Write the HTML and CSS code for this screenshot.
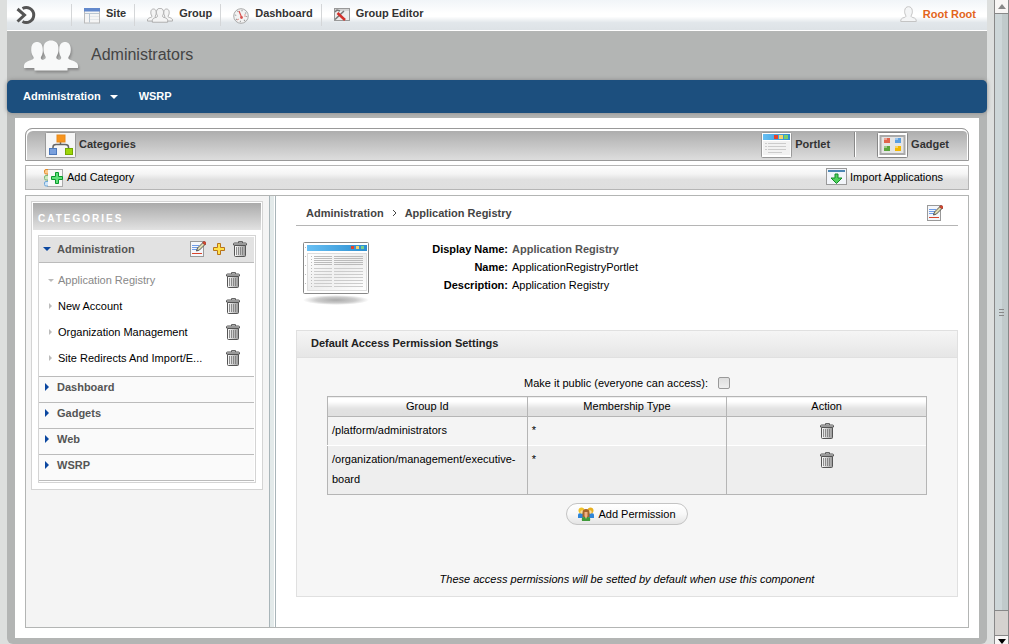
FILE: index.html
```
<!DOCTYPE html>
<html lang="en">

<head>
   <meta charset="UTF-8">
   <meta name="viewport" content="width=device-width, initial-scale=1.0">
   <title>Application Registry</title>
   <link rel="stylesheet" href="styles.css">
</head>

<body>
   <!-- shared icons and gradients -->
   <svg class="defs" aria-hidden="true">
      <defs>
         <linearGradient id="g-steel" x1="0" x2="1">
            <stop offset="0" stop-color="#fff" />
            <stop offset="1" stop-color="#999" />
         </linearGradient>
         <linearGradient id="g-paper" x1="0" y1="0" x2="1" y2="1">
            <stop offset="0" stop-color="#fff" />
            <stop offset="0.5" stop-color="#eee" />
            <stop offset="1" stop-color="#fff" />
         </linearGradient>
         <linearGradient id="g-sky" x1="0" x2="1">
            <stop offset="0" stop-color="#68c0f4" />
            <stop offset="1" stop-color="#2b8ed0" />
         </linearGradient>
         <radialGradient id="g-shadow">
            <stop offset="0" stop-color="#aaa" />
            <stop offset="0.6" stop-color="#ccc" />
            <stop offset="1" stop-color="#fff" />
         </radialGradient>
      </defs>
      <symbol id="trash" viewBox="0 0 16 16">
         <path d="M2.500 4.500h11v10q0 1-1 1h-9q-1 0-1-1z" fill="url(#g-steel)" stroke="#555" />
         <path d="M4.500 6v8M6.500 6v8M8.500 6v8M10.500 6v8" stroke="#777" stroke-width=".8" />
         <path d="M6.500 2V.5h4V2" fill="none" stroke="#666" />
         <path d="M1.500 4V3q0-1 1-1h11q1 0 1 1v1z" fill="#ddd" stroke="#555" />
      </symbol>
      <symbol id="edit" viewBox="0 0 16 16">
         <rect x=".5" y=".5" width="13" height="15" fill="#f5f7fb" stroke="#999" />
         <path d="M2 4.500h7M2 6.500h7M2 8.500h5" stroke="#6f9de8" />
         <path d="M2 12.500h10" stroke="#d8452c" />
         <path d="M6.500 10l1-3 5.500-5.500 2 2-5.500 5.500z" fill="#e0dcb0" stroke="#444" stroke-width=".9" />
         <path d="M12.500 2l1-1.500h1.500l1 1v1.500l-1 1z" fill="#d8452c" stroke="#874038" stroke-width=".6" />
      </symbol>
      <symbol id="people" viewBox="0 0 56 32">
         <path d="M1 28c-.5-4 1-5.500 4.500-7 3-1.200 6-1.500 5-4C8.300 14 8 11 8.300 8c.4-4 2.700-6 5.700-6s5.300 2 5.700 6c.3 3 .3 6-1.700 9-.8 2.500 1.500 2.800 4 4V28z" />
         <path d="M55 28c.5-4-1-5.500-4.500-7-3-1.200-6-1.500-5-4 2.200-3 2.500-6 2.200-9-.4-4-2.700-6-5.700-6s-5.300 2-5.700 6c-.3 3-.3 6 1.700 9 .8 2.500-1.500 2.800-4 4V28z" />
         <path d="M11.500 30.500c-.5-6 1-8 5-9.500 4-1.500 7-1.700 6-4.500C20.500 13 20.300 11 20.500 7.500 21 2.500 24 .5 28 .5s7 2 7.500 7c.2 3.500 0 5.500-2 9-1 2.800 2 3 6 4.500 4 1.500 5.500 3.500 5 9.500z" class="front" />
      </symbol>
   </svg>

   <div class="page">
      <header class="topbar">
         <a class="logo" href="#" aria-label="Home">
            <svg width="22" height="20" viewBox="0 0 22 20">
               <path d="M6.500 3.500a7.500 7.500 0 1 1 0 13" fill="none" stroke="#555" stroke-width="3" />
               <path d="M1.500 4l7 6-7 6.500" fill="none" stroke="#555" stroke-width="3" />
            </svg>
         </a>
         <nav class="menu">
            <a href="#">
               <svg width="16" height="16" viewBox="0 0 16 16">
                  <rect x=".5" y=".5" width="15" height="14.500" fill="#f5f5f5" stroke="#bbb" />
                  <path d="M0 0h16v3.500H0z" fill="#6389cc" />
                  <path d="M1 5.500h14M5.500 5.500v9" stroke="#b9c6d2" />
                  <path d="M6 8.500h9M6 11.500h9" stroke="#e4e8ec" />
               </svg>
               Site
            </a>
            <a href="#">
               <svg class="people-small" width="26" height="15">
                  <use href="#people" />
               </svg>
               Group
            </a>
            <a href="#">
               <svg width="16" height="16" viewBox="0 0 16 16">
                  <circle cx="8" cy="8" r="7.300" fill="#f3f3f3" stroke="#aaa" />
                  <circle cx="8" cy="8" r="5.500" fill="none" stroke="#999" stroke-width="1.500" stroke-dasharray="1 3.300" />
                  <path d="M6 3l2.500 6" stroke="#d9534f" stroke-width="1.200" />
                  <circle cx="8.500" cy="9.500" r="1.400" fill="#d9534f" />
                  <path d="M12 6v3M4 12l2-1" stroke="#e59a94" />
               </svg>
               Dashboard
            </a>
            <a href="#">
               <svg width="16" height="13" viewBox="0 0 16 13">
                  <rect x=".5" y=".5" width="15" height="12" fill="#ececec" stroke="#999" />
                  <path d="M1 2h14" stroke="#bbb" />
                  <path d="M1 11.500L10 3M1 4l2-2 3 1" fill="none" stroke="#777" stroke-width="1.500" />
                  <path d="M3.500 5L11 12" stroke="#d3302a" stroke-width="2.500" />
               </svg>
               Group Editor
            </a>
         </nav>
         <a class="user" href="#">
            <svg width="17" height="17" viewBox="0 0 17 17">
               <path d="M.7 15.500c0-2.500 1-3.500 3.500-4 1.800-.4 2-1.200 1.300-2.500C4.700 7.500 4.500 6 4.700 4.500 5 2 6.500.7 8.500.7s3.500 1.300 3.800 3.800c.2 1.500 0 3-.8 4.500-.7 1.300-.5 2.100 1.300 2.500 2.500.5 3.500 1.500 3.500 4z" fill="#f4f5f6" stroke="#c4c4c4" />
            </svg>
            Root Root
         </a>
      </header>

      <div class="group-head">
         <svg class="people-large" width="56" height="32">
            <use href="#people" />
         </svg>
         <h1>Administrators</h1>
      </div>

      <nav class="main-nav">
         <a href="#">Administration <span class="caret"></span></a>
         <a href="#">WSRP</a>
      </nav>

      <main class="content">
         <div class="tabs">
            <a class="tab" href="#">
               <svg width="31" height="26" viewBox="0 0 31 26">
                  <rect x=".5" y=".5" width="30" height="25" rx="1" fill="#f6f6f6" stroke="#999" />
                  <path d="M15.500 9v4M8 17v-2q0-2.500 3-2.500h9q3.500 0 3.500 2.500v2" fill="none" stroke="#666" stroke-width="1.500" />
                  <rect x="12" y="3" width="8" height="7" fill="#f7941d" stroke="#e8891a" />
                  <rect x="4.500" y="16.500" width="7" height="6" fill="#7aa0dc" stroke="#4c78bc" />
                  <rect x="20.500" y="16.500" width="7" height="6" fill="#9ed50a" stroke="#74a800" />
               </svg>
               Categories
            </a>
            <a class="tab portlet-tab" href="#">
               <svg width="31" height="26" viewBox="0 0 31 26">
                  <rect x=".5" y=".5" width="30" height="25" rx="1" fill="#fff" stroke="#999" />
                  <path d="M2 2h27v6H2z" fill="url(#g-sky)" />
                  <path d="M13 3h4v4h-4z" fill="#e5422b" />
                  <path d="M18 3h4v4h-4z" fill="#f7d36b" />
                  <path d="M23 3h4v4h-4z" fill="#7ccf6b" />
                  <path d="M2 9h27v14H2z" fill="#f2f2f2" />
                  <path d="M4 11.500h2M7 11.500h18M4 14.500h2M7 14.500h18M4 17.500h2M7 17.500h18M7 20.500h14" stroke="#ccc" />
               </svg>
               Portlet
            </a>
            <a class="tab gadget-tab" href="#">
               <svg width="31" height="26" viewBox="0 0 31 26">
                  <rect x=".5" y=".5" width="30" height="25" rx="1" fill="#fff" stroke="#888" />
                  <rect x="3.500" y="4" width="24" height="18" fill="#e5e5e5" stroke="#aaa" stroke-width="2" />
                  <path d="M7 6h6v5H7z" fill="#e0644c" />
                  <path d="M18 6h6v5h-6z" fill="#5b9fe0" />
                  <path d="M7 14h6v5H7z" fill="#5ba63c" />
                  <path d="M18 14h6v5h-6z" fill="#f4b800" />
                  <path d="M7 6h3v2H7zM18 6h3v2h-3zM7 14h3v2H7zM18 14h3v2h-3z" fill="#fff" opacity=".4" />
               </svg>
               Gadget
            </a>
         </div>

         <div class="actions">
            <a class="action" href="#">
               <svg width="20" height="20" viewBox="0 0 20 20">
                  <rect x="3.500" y="1.500" width="15" height="17" fill="#f8f8f8" stroke="#aaa" />
                  <path d="M4 1.500H2Q.5 1.500.5 3v1.500Q.5 6 2 6h2" fill="#fbc98a" stroke="#e08a2a" />
                  <path d="M4 7.500H2Q.5 7.500.5 9v1.500Q.5 12 2 12h2" fill="#cdeac0" stroke="#7cb87a" />
                  <path d="M4 13.500H2Q.5 13.500.5 15v1.500Q.5 18 2 18h2" fill="#cfe4f8" stroke="#6fa8d8" />
                  <path d="M11.500 4.500h3v4h4v3h-4v4h-3v-4h-4v-3h4z" fill="#5fe07a" stroke="#0a9a2c" />
               </svg>
               Add Category
            </a>
            <a class="action import" href="#">
               <svg width="21" height="18" viewBox="0 0 21 18">
                  <rect x=".5" y=".5" width="20" height="16" fill="#f2f5fa" stroke="#999" />
                  <path d="M2 2h17v2H2z" fill="#4a86b4" />
                  <path d="M9 6h3v4h4l-5.500 5.500L5 10h4z" fill="#4fd15c" stroke="#148a28" />
               </svg>
               Import Applications
            </a>
         </div>

         <div class="workspace">
            <aside class="sidebar">
               <div class="tree">
                  <h2>CATEGORIES</h2>
                  <div class="tree-body">
                     <div class="category open">
                        <svg class="arrow" width="8" height="8" viewBox="0 0 8 8">
                           <path d="M0 2h8L4 6z" fill="#0b47a0" />
                        </svg>
                        <a href="#">Administration</a>
                        <button class="icon" aria-label="Edit category"><svg width="16" height="16"><use href="#edit" /></svg></button>
                        <button class="icon" aria-label="Add application">
                           <svg width="14" height="14" viewBox="0 0 14 14">
                              <path d="M5.500 1.500h3v4h4v3h-4v4h-3v-4h-4v-3h4z" fill="#ffe14a" stroke="#b8741a" />
                           </svg>
                        </button>
                        <button class="icon" aria-label="Delete category"><svg width="16" height="16"><use href="#trash" /></svg></button>
                     </div>
                     <ul class="apps">
                        <li class="selected">
                           <svg class="arrow" width="6" height="6" viewBox="0 0 6 6"><path d="M0 2h6L3 5z" fill="#bbb" /></svg>
                           <a href="#">Application Registry</a>
                           <button class="icon" aria-label="Delete Application Registry"><svg width="16" height="16"><use href="#trash" /></svg></button>
                        </li>
                        <li>
                           <svg class="arrow" width="6" height="6" viewBox="0 0 6 6"><path d="M1 0l3 3-3 3z" fill="#bbb" /></svg>
                           <a href="#">New Account</a>
                           <button class="icon" aria-label="Delete New Account"><svg width="16" height="16"><use href="#trash" /></svg></button>
                        </li>
                        <li>
                           <svg class="arrow" width="6" height="6" viewBox="0 0 6 6"><path d="M1 0l3 3-3 3z" fill="#bbb" /></svg>
                           <a href="#">Organization Management</a>
                           <button class="icon" aria-label="Delete Organization Management"><svg width="16" height="16"><use href="#trash" /></svg></button>
                        </li>
                        <li>
                           <svg class="arrow" width="6" height="6" viewBox="0 0 6 6"><path d="M1 0l3 3-3 3z" fill="#bbb" /></svg>
                           <a href="#">Site Redirects And Import/E...</a>
                           <button class="icon" aria-label="Delete Site Redirects"><svg width="16" height="16"><use href="#trash" /></svg></button>
                        </li>
                     </ul>
                     <div class="category">
                        <svg class="arrow" width="8" height="8" viewBox="0 0 8 8"><path d="M2 0l4 4-4 4z" fill="#0b47a0" /></svg>
                        <a href="#">Dashboard</a>
                     </div>
                     <div class="category">
                        <svg class="arrow" width="8" height="8" viewBox="0 0 8 8"><path d="M2 0l4 4-4 4z" fill="#0b47a0" /></svg>
                        <a href="#">Gadgets</a>
                     </div>
                     <div class="category">
                        <svg class="arrow" width="8" height="8" viewBox="0 0 8 8"><path d="M2 0l4 4-4 4z" fill="#0b47a0" /></svg>
                        <a href="#">Web</a>
                     </div>
                     <div class="category">
                        <svg class="arrow" width="8" height="8" viewBox="0 0 8 8"><path d="M2 0l4 4-4 4z" fill="#0b47a0" /></svg>
                        <a href="#">WSRP</a>
                     </div>
                  </div>
               </div>
            </aside>
            <div class="splitter"></div>

            <section class="detail">
               <div class="crumbs">
                  <a href="#">Administration</a>
                  <svg width="5" height="8" viewBox="0 0 5 8"><path d="M1 1l3 3-3 3" fill="none" stroke="#444" /></svg>
                  <span>Application Registry</span>
                  <button class="icon" aria-label="Edit application"><svg width="16" height="16"><use href="#edit" /></svg></button>
               </div>

               <div class="summary">
                  <svg width="70" height="66" viewBox="0 -1 70 66">
                     <ellipse cx="35" cy="59" rx="33" ry="5" fill="url(#g-shadow)" />
                     <rect x="2.500" y="1.500" width="65" height="51" rx="1" fill="#fff" stroke="#888" />
                     <rect x="6" y="4" width="60" height="6" fill="url(#g-sky)" />
                     <path d="M50 5h3v3h-3z" fill="#e5422b" />
                     <path d="M55 5h3v3h-3z" fill="#f7d36b" />
                     <path d="M60 5h3v3h-3z" fill="#7ccf8b" />
                     <rect x="6.500" y="12.500" width="59" height="37" fill="url(#g-paper)" stroke="#ddd" />
                     <path d="M13 15.500h49M13 17.500h49M13 19.500h49M13 21.500h49M13 23.500h49" stroke="#bbb" />
                     <path d="M13 27.500h49M13 30.500h49M13 33.500h49M13 36.500h49M13 39.500h49M13 42.500h49M13 45.500h49" stroke="#ccc" />
                     <path d="M32 15v32" stroke="#f2f2f2" stroke-width="2" />
                     <path d="M10.500 15v31" stroke="#bbb" stroke-dasharray="1 2" />
                     <path d="M4.500 6v44" stroke="#bbb" stroke-dasharray="1 8" />
                  </svg>
                  <dl>
                     <dt>Display Name:</dt>
                     <dd class="strong">Application Registry</dd>
                     <dt>Name:</dt>
                     <dd>ApplicationRegistryPortlet</dd>
                     <dt>Description:</dt>
                     <dd>Application Registry</dd>
                  </dl>
               </div>

               <div class="panel">
                  <h3>Default Access Permission Settings</h3>
                  <div class="panel-body">
                     <div class="public">
                        <label for="public">Make it public (everyone can access):</label>
                        <input type="checkbox" id="public">
                     </div>
                     <table>
                        <thead>
                           <tr>
                              <th>Group Id</th>
                              <th>Membership Type</th>
                              <th>Action</th>
                           </tr>
                        </thead>
                        <tbody>
                           <tr>
                              <td>/platform/administrators</td>
                              <td>*</td>
                              <td class="center"><button class="icon" aria-label="Delete permission"><svg width="16" height="16"><use href="#trash" /></svg></button></td>
                           </tr>
                           <tr>
                              <td>/organization/management/executive-board</td>
                              <td>*</td>
                              <td class="center"><button class="icon" aria-label="Delete permission"><svg width="16" height="16"><use href="#trash" /></svg></button></td>
                           </tr>
                        </tbody>
                     </table>
                     <button class="add">
                        <svg width="16" height="14" viewBox="0 0 16 14">
                           <path d="M0 11V8q0-2 3-2h2v5zM16 11V8q0-2-3-2h-2v5z" fill="#2f86d8" />
                           <circle cx="3.500" cy="3.500" r="3" fill="#f0c22a" />
                           <circle cx="12.500" cy="3.500" r="3" fill="#e8b020" />
                           <circle cx="4" cy="5" r="1.700" fill="#f9dca0" />
                           <circle cx="12" cy="5" r="1.700" fill="#f9dca0" />
                           <path d="M4 14q-1-4 2-4h4q3 0 2 4z" fill="#3f9a3a" />
                           <path d="M4.500 10V6q0-4 3.500-4t3.500 4v4z" fill="#a5652a" />
                           <path d="M6.500 5h3v4l-1.500 3-1.500-3z" fill="#f2b184" />
                        </svg>
                        Add Permission
                     </button>
                     <p class="note">These access permissions will be setted by default when use this component</p>
                  </div>
               </div>
            </section>
         </div>
      </main>
   </div>

   <div class="scroll" aria-hidden="true">
      <div class="scroll-end"><svg width="8" height="5" viewBox="0 0 8 5"><path d="M0 5l4-5 4 5z" fill="#888" /></svg></div>
      <div class="scroll-thumb"><span></span><span></span><span></span></div>
      <div class="scroll-track"></div>
      <div class="scroll-end down"><svg width="8" height="5" viewBox="0 0 8 5"><path d="M0 0h8L4 5z" fill="#000" /></svg></div>
   </div>
</body>

</html>
```
FILE: styles.css
```
* {
   box-sizing: border-box;
}

body {
   margin: 0;
   display: flex;
   min-height: 100vh;
   background-color: #dddfde;
   font-family: "Liberation Sans", Arial, sans-serif;
   font-size: 11px;
   line-height: 18px;
   color: #000;
}

a {
   color: inherit;
   text-decoration: none;
}

svg {
   display: block;
   flex: none;
}

.defs {
   position: absolute;
   width: 0;
   height: 0;
}

button {
   font: inherit;
   color: inherit;
   cursor: pointer;
}

.icon {
   padding: 0;
   border: 0;
   background: none;
}

.page {
   flex: 1;
   min-width: 0;
   margin: 0 7px;
   background-color: #b3b5b4;
   border-radius: 0 0 6px 6px;
   display: flex;
   flex-direction: column;
}

/* top bar */
.topbar {
   display: flex;
   height: 31px;
   padding: 0 11px 0 9px;
   border-bottom: 1px solid #fff;
   background: linear-gradient(#f1f5f8, #fff 45%, #fff 55%, #e2e7eb 75%, #dde2e6);
   font-weight: bold;
   color: #333;
}

.logo {
   width: 55px;
   padding-top: 5px;
}

.menu {
   display: flex;
   flex: 1;
   align-items: flex-start;
   padding-top: 4px;
}

.menu a,
.user {
   display: flex;
   gap: 6px;
}

.menu a {
   height: 22px;
   padding: 0 8px 0 12px;
   border-left: 1px solid #d4d6d8;
}

.menu svg {
   margin-top: 4px;
}

.user {
   padding-top: 5px;
   color: #e2651c;
}

.user svg {
   margin-top: 1px;
}

.people-small {
   fill: #f4f4f4;
   stroke: #aaa;
   stroke-width: 2;
}

.people-large {
   fill: #f8f9f9;
   filter: drop-shadow(1px 2px 1px #888);
}

.people-large .front {
   stroke: #999;
}

.group-head {
   display: flex;
   gap: 12px;
   height: 49px;
   padding: 9px 16px;
}

.group-head h1 {
   margin: 0;
   font-size: 16px;
   font-weight: normal;
   line-height: 30px;
   color: #444;
}

.main-nav {
   display: flex;
   gap: 21px;
   height: 33px;
   padding: 0 16px;
   border-radius: 5px;
   background-color: #1c4f7e;
   box-shadow: 0 0 4px #888;
   font-weight: bold;
   line-height: 33px;
   color: #fff;
}

.main-nav a {
   display: flex;
   align-items: center;
   gap: 9px;
}

.caret {
   border: 4px solid transparent;
   border-top-color: #fff;
   border-bottom: 0;
}

.content {
   flex: 1;
   display: flex;
   flex-direction: column;
   margin: 5px 8px 6px;
   padding: 10px;
   background-color: #fff;
}

/* toolbars */
.tabs {
   display: flex;
   height: 33px;
   padding: 3px 19px;
   border: 1px solid #999;
   border-radius: 7px 7px 0 0;
   background: linear-gradient(#aaa, #ddd);
   box-shadow: inset 1px 2px #fff, inset -1px 0 #fff;
   font-weight: bold;
   color: #333;
}

.tab,
.action {
   display: flex;
   gap: 3px;
}

.tab {
   line-height: 24px;
}

.portlet-tab {
   margin-left: auto;
   padding-right: 24px;
   border-right: 1px solid #888;
}

.gadget-tab {
   padding-left: 21px;
   border-left: 1px solid #fff;
}

.actions {
   display: flex;
   justify-content: space-between;
   height: 25px;
   margin: 4px 0 5px;
   padding: 2px 25px 2px 18px;
   border: 1px solid #b5b5b5;
   background: linear-gradient(#fff, #f4f4f4 35%, #e0e0e0 60%, #dfdfdf);
   line-height: 18px;
}

.workspace {
   flex: 1;
   display: flex;
   border: 1px solid #b3b5b4;
}

/* category tree */
.sidebar {
   width: 243px;
   padding: 5px;
   background-color: #f4f4f4;
}

.tree {
   width: 232px;
   padding: 1px 1px 6px;
   border: 1px solid #d4d4d4;
   background-color: #fff;
}

.tree h2 {
   margin: 0 0 5px;
   padding: 7px 5px 2px;
   background: linear-gradient(#aaa, #e2e2e2);
   font-size: 10px;
   line-height: 18px;
   letter-spacing: 2px;
   color: #fff;
}

.tree-body {
   margin: 0 5px;
   padding: 1px 1px 1px 0;
   border: 1px solid #d4d4d4;
}

.category {
   display: flex;
   align-items: center;
   gap: 6px;
   height: 26px;
   padding: 0 6px 6px 4px;
   border-bottom: 1px solid #bbb;
   background-color: #fafafa;
   font-weight: bold;
   color: #555;
}

.category.open {
   padding-bottom: 1px;
   background-color: #e2e2e2;
}

.category a,
.apps a {
   flex: 1;
}

.apps {
   margin: 0;
   padding: 4px 13px 5px 9px;
   border-bottom: 1px solid #bbb;
   list-style: none;
}

.apps li {
   display: flex;
   align-items: center;
   gap: 4px;
   height: 26px;
}

.apps .selected {
   color: #888;
}

.splitter {
   width: 7px;
   border: 1px solid #a9b5b9;
   border-width: 0 1px;
   background-color: #e3eaea;
   box-shadow: inset -1px 0 #fff;
}

/* application details */
.detail {
   flex: 1;
   min-width: 0;
   padding: 9px 10px 30px 20px;
}

.crumbs {
   display: flex;
   align-items: center;
   gap: 8px;
   height: 21px;
   padding: 0 15px 4px 10px;
   border-bottom: 1px solid #b5b5b5;
   font-weight: bold;
   color: #444;
}

.crumbs .icon {
   margin-left: auto;
}

.summary {
   display: flex;
   padding: 14px 0 24px 5px;
}

.summary dl {
   display: grid;
   grid-template-columns: 137px auto;
   column-gap: 4px;
   align-content: start;
   margin: 0;
}

.summary dt {
   font-weight: bold;
   text-align: right;
}

.summary dd {
   margin: 0;
}

.summary .strong {
   font-weight: bold;
   color: #555;
}

.panel {
   border: 1px solid #e0e0e0;
   background-color: #f6f6f6;
}

.panel h3 {
   margin: 0;
   padding: 3px 14px 5px;
   border-bottom: 1px solid #e0e0e0;
   background: linear-gradient(#f5f5f5, #e6e6e6);
   font-size: 11px;
   line-height: 18px;
   color: #222;
}

.panel-body {
   display: flex;
   flex-direction: column;
   align-items: center;
   padding: 16px 30px 8px;
}

.public {
   display: flex;
   align-items: center;
   gap: 10px;
   margin-bottom: 4px;
}

.public input {
   appearance: none;
   width: 12px;
   height: 12px;
   margin: 0;
   border: 1px solid #999;
   border-radius: 2px;
   background: linear-gradient(#ddd, #eee);
}

table {
   width: 100%;
   table-layout: fixed;
   border-collapse: collapse;
   border: 1px solid #b5b5b5;
   line-height: 20px;
}

th,
td {
   padding: 0 4px;
   border-right: 1px solid #b5b5b5;
}

th {
   border-bottom: 1px solid #b5b5b5;
   background: linear-gradient(#fff 20%, #e2e2e2 60%, #dfdfdf);
   font-weight: normal;
   line-height: 19px;
}

td {
   padding: 3px 4px 5px;
   vertical-align: top;
   background-color: #f4f4f4;
}

tbody tr + tr td {
   border-top: 1px solid #fff;
   background-color: #eee;
}

.center {
   text-align: center;
}

td .icon {
   display: inline-block;
   padding: 3px 2px 1px;
   vertical-align: top;
}

.add {
   display: flex;
   align-items: center;
   gap: 4px;
   height: 22px;
   margin-top: 8px;
   padding: 0 11px 1px;
   border: 1px solid #c4c4c4;
   border-radius: 11px;
   background: linear-gradient(#fff, #f8f8f8 50%, #e4e4e4);
}

.note {
   margin: 45px 0 0;
   font-style: italic;
}

/* window scroll bar */
.scroll {
   display: flex;
   flex-direction: column;
   width: 15px;
   border: 1px solid #888;
   border-width: 0 1px;
   background-color: #d5d2cf;
}

.scroll-end {
   display: flex;
   align-items: center;
   justify-content: center;
   height: 14px;
   border-bottom: 1px solid #888;
   background-color: #f8f6f5;
}

.scroll-end.down {
   align-items: flex-end;
   height: 9px;
   border-top: 1px solid #888;
   border-bottom: 0;
}

.scroll-thumb {
   flex: 1;
   display: flex;
   flex-direction: column;
   align-items: center;
   justify-content: center;
   gap: 2px;
   border-bottom: 1px solid #888;
   background: linear-gradient(to right, #cdd6d8 50%, #c1cacb 50%);
}

.scroll-thumb span {
   width: 5px;
   height: 1px;
   background-color: #888;
}

.scroll-track {
   height: 24px;
}
```
